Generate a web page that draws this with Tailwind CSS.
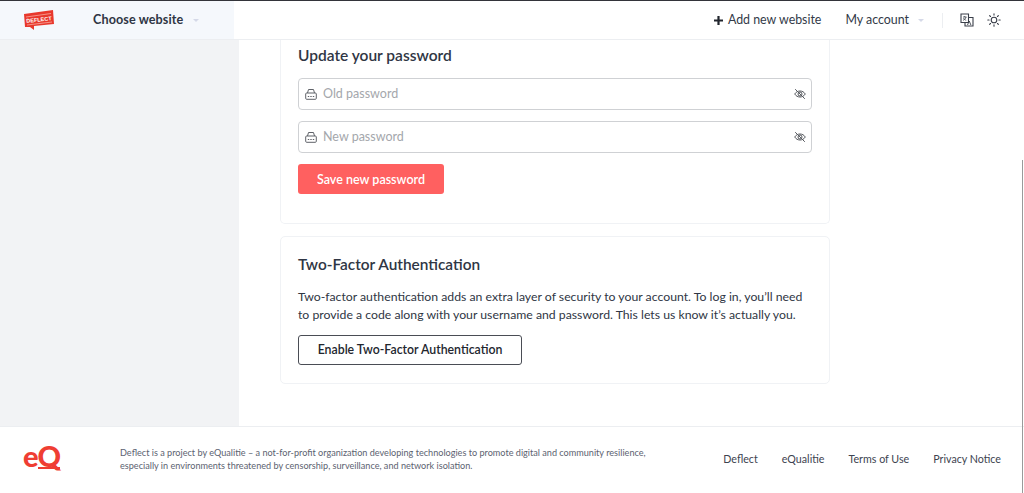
<!DOCTYPE html>
<html lang="en">
  <head>
    <meta charset="UTF-8" />
    <meta name="viewport" content="width=device-width, initial-scale=1.0" />
    <title>Deflect account</title>
    <script src="https://cdn.jsdelivr.net/npm/@tailwindcss/browser@4"></script>
  </head>
  <body class="h-[493px] overflow-hidden bg-white font-['Lato',sans-serif] text-[#2f3644] relative flex flex-col">
    <header class="h-10 shrink-0 flex border-t border-t-[#33343a] border-b border-b-[#eceef1]">
      <div class="w-[234px] h-[38px] bg-[#f5f8fc] flex items-center">
        <svg class="ml-6 w-[30px] h-5" viewBox="0 0 30 20">
          <path d="M0 4 29 0 30 14 10 16 10 20 6 17 1 17Z" fill="#e8382c" />
          <path d="M2 7 27 3.500M3 15 28 12" stroke="#f7a99f" stroke-width="0.8" />
          <text x="15" y="11.500" text-anchor="middle" transform="rotate(-6 15 10)" font-size="5.500" font-weight="700" fill="#fff" font-family="Liberation Sans">DEFLECT</text>
        </svg>
        <span class="ml-[39px] text-[12.600px] font-bold tracking-[0.1px]">Choose website</span>
        <span class="ml-[10px] w-0 h-0 border-x-[3px] border-x-transparent border-t-[3px] border-t-[#d5d9e8]"></span>
      </div>
      <div class="flex-1 flex items-center justify-end text-[#333a48] text-[12.400px]">
        <svg class="w-[11px] h-[11px] mr-[4px]" viewBox="0 0 11 11"><path d="M5.500 1v9M1 5.500h9" stroke="#22262e" stroke-width="2.200" /></svg>
        <span>Add new website</span>
        <span class="ml-6">My account</span>
        <span class="ml-[9px] w-0 h-0 border-x-[3px] border-x-transparent border-t-[3px] border-t-[#d5d9e8]"></span>
        <span class="ml-[18px] w-px h-[15px] bg-[#eceef1]"></span>
        <svg class="ml-[17px] w-3.5 h-3.5" viewBox="0 0 14 14" fill="none" stroke="#3a3f4a" stroke-width="1.100">
          <path d="M1 1h7.500v8.500H1z" />
          <path d="M8.500 4.500H13V13H5V9.500" />
          <path d="M3 4h3.500M4.700 3v1M6 4c-.3 1.500-1.300 2.600-3 3.300M3.500 5c.4 1 1.300 1.800 2.700 2.300" stroke-width="0.800" />
          <path d="M7.500 12l1.700-4 1.700 4" stroke-width="0.900" />
        </svg>
        <svg class="ml-[13px] mr-[23px] w-3.5 h-3.5" viewBox="0 0 14 14" fill="none" stroke="#3a3f4a" stroke-width="1.100" stroke-linecap="round">
          <circle cx="7" cy="7" r="2.800" />
          <path d="M7 .8v1.300M7 11.900v1.300M.8 7h1.300M11.900 7h1.300M2.600 2.600l.9.9M10.500 10.500l.9.9M2.600 11.400l.9-.9M10.500 3.500l.9-.9" />
        </svg>
      </div>
    </header>

    <div class="flex-1 flex min-h-0">
      <aside class="w-[239px] shrink-0 bg-[#f2f3f5]"></aside>
      <main class="flex-1 pl-[41px] overflow-hidden">
        <section class="w-[550px] h-[184px] border border-t-0 border-[#f0f2f5] rounded-b-[5px] px-[17px] pt-[5px]">
          <h2 class="text-[15.500px] leading-5 font-semibold">Update your password</h2>
          <div class="mt-[13px] h-8 border border-[#cfd1d4] rounded-[4px] flex items-center px-[6px] text-[12.500px] text-[#a4a7ac]">
            <svg class="w-3 h-3 shrink-0" viewBox="0 0 12 12" fill="none" stroke="#5f6268" stroke-width="1">
              <path d="M2.500 5 3.500 1.500h5L9.500 5" />
              <rect x=".7" y="5" width="10.600" height="6.300" rx="1" />
              <path d="M2.800 8.500h1.400M5.300 8.500h1.400M7.800 8.500h1.400" stroke-width="1.200" />
            </svg>
            <span class="ml-[6px] pt-px flex-1">Old password</span>
            <svg class="w-3 h-3 mr-[-1px]" viewBox="0 0 12 12" fill="none" stroke="#55585e" stroke-width="1">
              <path d="M.7 6C2 4 3.800 3 6 3s4 1 5.300 3C10 8 8.200 9 6 9S2 8 .7 6z" />
              <circle cx="6" cy="6" r="2" />
              <path d="M1.200 1.200l9.600 9.600" />
            </svg>
          </div>
          <div class="mt-[11px] h-8 border border-[#cfd1d4] rounded-[4px] flex items-center px-[6px] text-[12.500px] text-[#a4a7ac]">
            <svg class="w-3 h-3 shrink-0" viewBox="0 0 12 12" fill="none" stroke="#5f6268" stroke-width="1">
              <path d="M2.500 5 3.500 1.500h5L9.500 5" />
              <rect x=".7" y="5" width="10.600" height="6.300" rx="1" />
              <path d="M2.800 8.500h1.400M5.300 8.500h1.400M7.800 8.500h1.400" stroke-width="1.200" />
            </svg>
            <span class="ml-[6px] flex-1">New password</span>
            <svg class="w-3 h-3 mr-[-1px]" viewBox="0 0 12 12" fill="none" stroke="#55585e" stroke-width="1">
              <path d="M.7 6C2 4 3.800 3 6 3s4 1 5.300 3C10 8 8.200 9 6 9S2 8 .7 6z" />
              <circle cx="6" cy="6" r="2" />
              <path d="M1.200 1.200l9.600 9.600" />
            </svg>
          </div>
          <button class="block mt-[11px] w-[146px] h-[30px] pt-[2px] rounded-[3px] bg-[#ff6060] text-white text-[12.500px] font-semibold">Save new password</button>
        </section>
        <section class="mt-3 w-[550px] h-[148px] border border-[#f0f2f5] rounded-[5px] px-[17px] pt-[17px]">
          <h2 class="text-[15.400px] leading-5 font-semibold">Two-Factor Authentication</h2>
          <p class="mt-[14px] w-[515px] text-[12.250px] leading-[17.500px]">Two-factor authentication adds an extra layer of security to your account. To log in, you’ll need to provide a code along with your username and password. This lets us know it’s actually you.</p>
          <button class="block mt-[12px] w-[224px] h-[30px] pt-px rounded-[3px] border border-[#4a4d55] text-[12.300px] font-semibold text-[#22262e]">Enable Two-Factor Authentication</button>
        </section>
      </main>
    </div>

    <footer class="h-[67px] shrink-0 border-t border-[#eceef1] flex items-center pl-6 pb-[2px] text-[#5c6270]">
      <div class="w-[37px] ml-[-1px] mb-[4px] flex items-baseline text-[#ef3e33] text-[29px] leading-[22px] font-black tracking-[-1px]">
        <span>e</span>
        <span class="border-b-2 border-[#ef3e33]">Q</span>
      </div>
      <p class="ml-[60px] w-[540px] text-[9.120px] leading-[13px]">Deflect is a project by eQualitie – a not-for-profit organization developing technologies to promote digital and community resilience, especially in environments threatened by censorship, surveillance, and network isolation.</p>
      <nav class="ml-auto mr-[23px] mt-px flex gap-6 text-[10.700px] text-[#3d4350]">
        <span>Deflect</span>
        <span>eQualitie</span>
        <span>Terms of Use</span>
        <span>Privacy Notice</span>
      </nav>
    </footer>

    <div class="absolute right-[1px] top-[160px] w-px h-[333px] bg-[#9a9a9a]"></div>
  </body>
</html>
